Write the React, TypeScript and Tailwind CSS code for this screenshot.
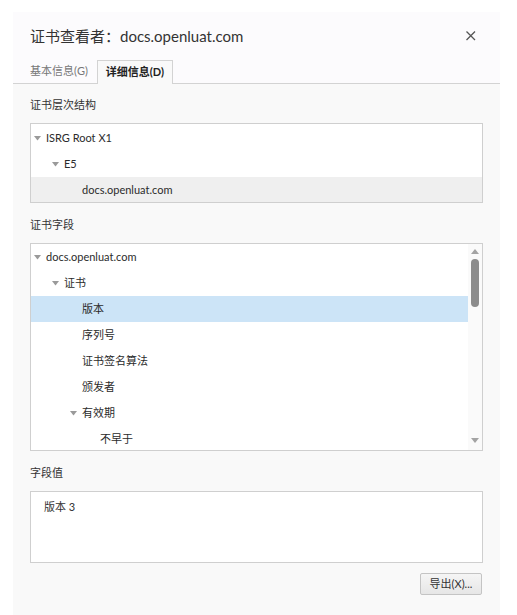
import React from "react";

const font = { fontFamily: 'Lato, "Noto Sans CJK SC", sans-serif' };

function Tri() {
  return (
    <svg width="7" height="5" viewBox="0 0 7 5" className="shrink-0">
      <path d="M0 0 L7 0 L3.5 4.5 Z" fill="#9a9a9a" />
    </svg>
  );
}

function Row({
  level,
  text,
  expand,
  selected,
  selBg,
}: {
  level: number;
  text: string;
  expand?: boolean;
  selected?: boolean;
  selBg?: string;
}) {
  const pads = ["pl-[3px]", "pl-[21px]", "pl-[39px]", "pl-[57px]"];
  return (
    <div
      className={`h-[26px] flex items-center ${pads[level]} ${selected ? selBg : ""}`}
    >
      <div className="w-[12px] flex items-center">{expand ? <Tri /> : null}</div>
      <span className="text-[11px] text-[#2b2b2b] whitespace-nowrap">{text}</span>
    </div>
  );
}

export default function App() {
  return (
    <div className="w-[517px] h-[615px] bg-white overflow-hidden" style={font}>
      <div className="ml-[13px] mt-[12px] w-[487px] h-[603px] bg-[#f9f9f9]">
        <div className="bg-[#fcfbfd]">
          <div className="h-[48px] pt-[13px] pl-[17px] pr-[18px] flex justify-between">
            <span className="text-[15px] leading-[22px] text-[#333]">
              证书查看者：docs.openluat.com
            </span>
            <svg width="22" height="22" viewBox="0 0 22 22">
              <path d="M6.5 6.5 L15 15 M15 6.5 L6.5 15" stroke="#555" strokeWidth="1.3" />
            </svg>
          </div>
          <div className="h-[24px] flex items-end border-b border-[#d3d3d3]">
            <div className="h-[23px] pl-[17px] pr-[9px] flex items-center text-[11px] text-[#777]">
              基本信息(G)
            </div>
            <div className="h-[24px] -mb-px w-[76px] border border-b-0 border-[#d3d3d3] bg-[#f9f9f9] flex items-center justify-center text-[11px] font-bold text-[#222]">
              详细信息(D)
            </div>
          </div>
        </div>
        <div className="px-[17px] pt-[12px]">
          <div className="h-[18px] leading-[18px] text-[11px] text-[#333] mb-[9px]">证书层次结构</div>
          <div className="h-[80px] border border-[#cfcfcf] bg-white overflow-hidden pt-px">
            <Row level={0} text="ISRG Root X1" expand />
            <Row level={1} text="E5" expand />
            <Row level={2} text="docs.openluat.com" selected selBg="bg-[#efefef]" />
          </div>
          <div className="h-[18px] leading-[18px] text-[11px] text-[#333] mt-[13px] mb-[9px]">证书字段</div>
          <div className="h-[208px] border border-[#cfcfcf] bg-white overflow-hidden flex">
            <div className="flex-1 overflow-hidden">
              <Row level={0} text="docs.openluat.com" expand />
              <Row level={1} text="证书" expand />
              <Row level={2} text="版本" selected selBg="bg-[#cce4f7]" />
              <Row level={2} text="序列号" />
              <Row level={2} text="证书签名算法" />
              <Row level={2} text="颁发者" />
              <Row level={2} text="有效期" expand />
              <Row level={3} text="不早于" />
            </div>
            <div className="w-[14px] bg-[#fafafa] flex flex-col items-center">
              <svg width="8" height="6" viewBox="0 0 8 6" className="mt-[5px]">
                <path d="M0 5 L8 5 L4 0 Z" fill="#a3a3a3" />
              </svg>
              <div className="mt-[4px] w-[8px] h-[48px] rounded-full bg-[#8c8c8c]" />
              <div className="flex-1" />
              <svg width="8" height="6" viewBox="0 0 8 6" className="mb-[6px]">
                <path d="M0 0 L8 0 L4 5 Z" fill="#a3a3a3" />
              </svg>
            </div>
          </div>
          <div className="h-[18px] leading-[18px] text-[11px] text-[#333] mt-[13px] mb-[9px]">字段值</div>
          <div className="h-[72px] border border-[#cfcfcf] bg-white pl-[13px] pt-[1px]">
            <span className="text-[11px] leading-[16px] text-[#333]">版本 3</span>
          </div>
          <div className="flex justify-end mt-[10px] pr-[1px]">
            <div className="w-[62px] h-[22px] border border-[#c4c4c4] rounded-[2px] bg-gradient-to-b from-[#f5f5f5] to-[#e6e6e6] flex items-center justify-center text-[11px] text-[#333]">
              导出(X)...
            </div>
          </div>
        </div>
      </div>
    </div>
  );
}
